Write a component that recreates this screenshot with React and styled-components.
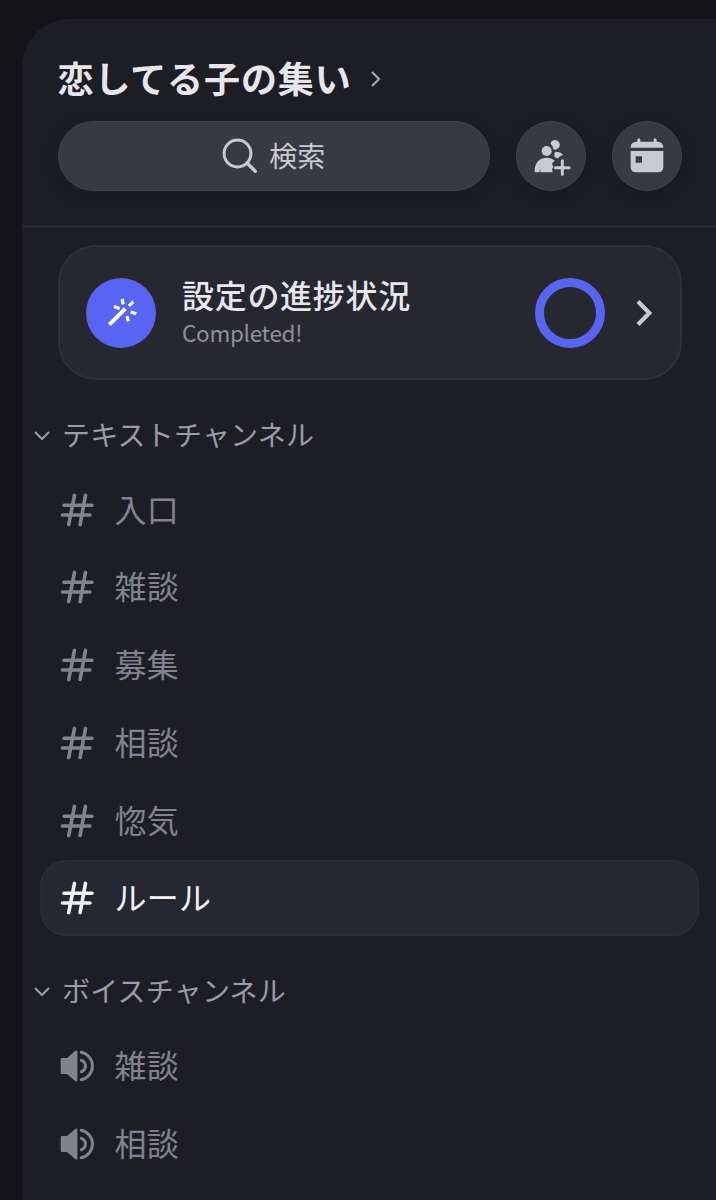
import * as React from 'react';
import styled, { createGlobalStyle, css } from 'styled-components';

const GlobalStyle = createGlobalStyle`
  * {
    box-sizing: border-box;
  }

  body {
    margin: 0;
    background: #131318;
    color: #e6e6ec;
    font-family: 'Noto Sans CJK JP', 'Noto Sans', sans-serif;
    overflow: hidden;
  }

  svg {
    flex: none;
  }
`;

const TEXT_CHANNELS = ['入口', '雑談', '募集', '相談', '惚気', 'ルール'];
const VOICE_CHANNELS = ['雑談', '相談'];

const Screen = styled.div`
  height: 1200px;
  padding: 19px 0 0 22px;
  background: #131318;
`;

const Sidebar = styled.aside`
  height: 1181px;
  border-top-left-radius: 48px;
  background: #1d1e23;
  overflow: hidden;
`;

const Header = styled.header`
  height: 209px;
  padding: 36px 34px 0 35.5px;
  border-bottom: 3px solid #25262b;
`;

const Title = styled.h1`
  display: flex;
  align-items: center;
  gap: 19px;
  height: 48px;
  margin: 0 0 18px;
  font-size: 36px;
  font-weight: 700;
  letter-spacing: 0.9px;
  line-height: 48px;
  white-space: nowrap;
`;

const Toolbar = styled.div`
  display: flex;
  gap: 26px;
`;

// CJK glyphs sit low in their line box, the bottom padding lifts them to the icon's centre
const Label = styled.span`
  padding-bottom: ${(props) => props.$lift || 3}px;
`;

const raised = css`
  display: flex;
  align-items: center;
  justify-content: center;
  height: 70px;
  padding: 0;
  border: 1.5px solid #42444d;
  background: #383a43;
  color: #c9c9d2;
  box-shadow: 0 4px 14px rgba(16, 17, 22, 0.35);
  font-family: inherit;
`;

const SearchButton = styled.button`
  ${raised}
  flex: 1;
  gap: 11px;
  border-radius: 35px;
  font-size: 28px;
`;

const RoundButton = styled.button`
  ${raised}
  width: 70px;
  border-radius: 50%;
`;

const ProgressCard = styled.section`
  display: flex;
  align-items: center;
  height: 135px;
  margin: 17px 34px 0 35.5px;
  padding: 0 27px 0 26.5px;
  border: 2px solid #303138;
  border-radius: 38px;
  background: #27272f;
`;

const WandBadge = styled.div`
  display: flex;
  align-items: center;
  justify-content: center;
  width: 70px;
  height: 70px;
  border-radius: 50%;
  background: #5865f2;
`;

const CardText = styled.div`
  flex: 1;
  margin: -1px 0 0 26px;
`;

const CardTitle = styled.div`
  font-size: 32px;
  font-weight: 500;
  letter-spacing: 0.7px;
  line-height: 40px;
`;

const CardStatus = styled.div`
  color: #8f909b;
  font-size: 22.5px;
  letter-spacing: -0.3px;
  line-height: 36px;
`;

const Ring = styled.div`
  width: 70px;
  height: 70px;
  margin-right: 31px;
  border: 9px solid #5865f2;
  border-radius: 50%;
`;

const Category = styled.h2`
  display: flex;
  align-items: center;
  gap: 12px;
  height: 40px;
  margin: ${(props) => props.$top}px 0 16px 12px;
  color: #9a9ba6;
  font-size: 28px;
  font-weight: 400;
  letter-spacing: 0.2px;
  line-height: 40px;
`;

const ChannelList = styled.ul`
  display: flex;
  flex-direction: column;
  gap: 1.8px;
  margin: 0;
  padding: 0 17px 0 18px;
  list-style: none;
`;

const Channel = styled.li`
  display: flex;
  align-items: center;
  gap: 19.5px;
  height: 76px;
  padding-left: 17px;
  border: 2px solid ${(props) => (props.$active ? '#2b2c33' : 'transparent')};
  border-radius: 26px;
  background: ${(props) => (props.$active ? '#252830' : 'transparent')};
  color: ${(props) => (props.$active ? '#f1f1f6' : '#82838f')};
  font-size: 32px;
  letter-spacing: 0.3px;
`;

const Chevron = ({ d, width, height, stroke, color = 'currentColor' }) => (
  <svg width={width} height={height} fill="none" stroke={color} strokeWidth={stroke}>
    <path d={d} />
  </svg>
);

const SearchIcon = () => (
  <svg width="36" height="36" viewBox="0 0 36 36" fill="none" stroke="currentColor">
    <circle cx="15.5" cy="15.5" r="13.4" strokeWidth="3" />
    <path d="M25 25l8.3 8.3" strokeWidth="3.4" strokeLinecap="round" />
  </svg>
);

const InviteIcon = () => (
  <svg width="40" height="40" viewBox="0 0 120 120" fill="currentColor">
    <circle cx="47" cy="45" r="15" />
    <path d="M59 20a14.500 14.500 0 1 1 14 21q-3 0-6-1a20 20 0 0 0-8-16z" />
    <path d="M70 58q0-11 5-11c10 0 18 4 21 10a24 24 0 0 0-15 10c-3 0-6-2-11-4z" />
    <path d="M11 106c0-26 14-41 36-41c11 0 19 4 25 10c-9 3-11 11-4 17c-5 5-7 10-2 17H28l0-12l-3 12H14q-3 0-3-3z" />
    <path
      d="M94 74v41M73.500 95h41"
      stroke="currentColor"
      strokeWidth="9"
      strokeLinecap="round"
    />
  </svg>
);

const CalendarIcon = () => (
  <svg width="40" height="40" viewBox="0 0 120 120" fill="currentColor">
    <path d="M11 35c0-12 7-18 20-18v-6q0-4.500 4.500-4.500t4.500 4.500v6h40v-6q0-4.500 4.500-4.500t4.500 4.500v6c13 0 20 6 20 18z" />
    <path d="M11 45h98v47q0 17-17 17H28q-17 0-17-17zM26 61v19h19V61z" fillRule="evenodd" />
  </svg>
);

const WandIcon = () => (
  <svg width="34" height="34" viewBox="0 0 102 102" fill="none" stroke="#fff">
    <path d="M16 86L64 38" strokeWidth="12" />
    <path d="M54 9l4 16M88 17L75 30M30 31l17 7M80 48l17 5M69 60l4 16" strokeWidth="9.500" />
  </svg>
);

const HashIcon = () => (
  <svg
    width="36"
    height="36"
    viewBox="0 0 36 36"
    fill="none"
    stroke="currentColor"
    strokeWidth="3.6"
    strokeLinecap="round"
  >
    <path d="M5 13.300h28M3.500 23h27.400M15.500 3.400L9.700 32.600M26.500 3.400L21.100 32.600" />
  </svg>
);

const SpeakerIcon = () => (
  <svg width="36" height="36" viewBox="0 0 36 36" fill="none" stroke="currentColor">
    <path
      d="M3 10h5l8.400-7.200q2-1.200 2 1v28.400q0 2.200-2 1L8 26H3q-1.300 0-1.300-1.300V11.300Q1.700 10 3 10z"
      fill="currentColor"
      stroke="none"
    />
    <path
      d="M22.300 4.300a14 14 0 0 1 0 27.400M22.300 12.300a6 6 0 0 1 0 11.400"
      strokeWidth="3"
      strokeLinecap="round"
    />
  </svg>
);

const CategoryHeading = ({ top, children }) => (
  <Category $top={top}>
    <Chevron width="16" height="12" d="M1 2l7 7l7-7" stroke="2.2" />
    <Label $lift={4}>{children}</Label>
  </Category>
);

const App = () => {
  return (
    <Screen>
      <GlobalStyle />
      <Sidebar>
        <Header>
          <Title>
            <Label $lift={4}>恋してる子の集い</Label>
            <Chevron width="10" height="18" d="M1 2l7 7l-7 7" stroke="2.2" color="#a3a4ae" />
          </Title>
          <Toolbar>
            <SearchButton>
              <SearchIcon />
              <Label $lift={2}>検索</Label>
            </SearchButton>
            <RoundButton>
              <InviteIcon />
            </RoundButton>
            <RoundButton>
              <CalendarIcon />
            </RoundButton>
          </Toolbar>
        </Header>

        <ProgressCard>
          <WandBadge>
            <WandIcon />
          </WandBadge>
          <CardText>
            <CardTitle>設定の進捗状況</CardTitle>
            <CardStatus>Completed!</CardStatus>
          </CardText>
          <Ring />
          <Chevron
            width="17"
            height="28"
            d="M2 2.500l11.300 11.500L2 25.500"
            stroke="4.2"
            color="#c9c9d2"
          />
        </ProgressCard>

        <CategoryHeading top={35.5}>テキストチャンネル</CategoryHeading>
        <ChannelList>
          {TEXT_CHANNELS.map((name) => (
            <Channel key={name} $active={name === 'ルール'}>
              <HashIcon />
              <Label $lift={4}>{name}</Label>
            </Channel>
          ))}
        </ChannelList>

        <CategoryHeading top={36}>ボイスチャンネル</CategoryHeading>
        <ChannelList>
          {VOICE_CHANNELS.map((name) => (
            <Channel key={name}>
              <SpeakerIcon />
              <Label $lift={4}>{name}</Label>
            </Channel>
          ))}
        </ChannelList>
      </Sidebar>
    </Screen>
  );
};

export default App;
